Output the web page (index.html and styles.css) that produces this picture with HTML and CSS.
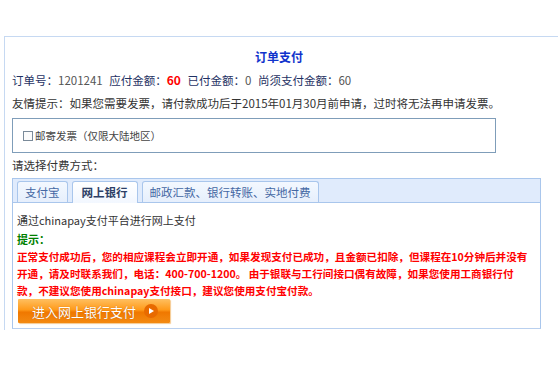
FILE: index.html
```html
<!DOCTYPE html>
<html lang="zh-CN">
<head>
    <meta charset="UTF-8">
    <title>订单支付</title>
    <link rel="stylesheet" href="styles.css">
</head>
<body>
<div class="pay-box">
    <h2 class="title">订单支付</h2>
    <p class="order-line">
        <span class="lbl">订单号：</span>1201241
        <span class="lbl">应付金额：</span><b class="money">60</b>
        <span class="lbl">已付金额：</span>0
        <span class="lbl">尚须支付金额：</span>60
    </p>
    <p class="notice">友情提示：如果您需要发票，请付款成功后于2015年01月30月前申请，过时将无法再申请发票。</p>
    <div class="invoice">
        <label><span class="chk"></span>邮寄发票（仅限大陆地区）</label>
    </div>
    <p class="choose">请选择付费方式：</p>
    <div class="tabs">
        <ul class="tab-head">
            <li>支付宝</li>
            <li class="on">网上银行</li>
            <li>邮政汇款、银行转账、实地付费</li>
        </ul>
        <div class="tab-body">
            <p class="via">通过chinapay支付平台进行网上支付</p>
            <p class="hint">提示：</p>
            <p class="warn">正常支付成功后，您的相应课程会立即开通，如果发现支付已成功，且金额已扣除，但课程在10分钟后并没有开通，请及时联系我们，电话：400-700-1200。 由于银联与工行间接口偶有故障，如果您使用工商银行付<br>款，不建议您使用chinapay支付接口，建议您使用支付宝付款。</p>
            <a class="pay-btn" href="#">进入网上银行支付<span class="arrow"></span></a>
        </div>
    </div>
</div>
</body>
</html>
```

FILE: styles.css
```css
html{
    overflow: hidden;
}
body{
    margin: 0;
    font-family: "Noto Sans CJK SC", "Noto Sans", sans-serif;
    font-size: 11.5px;
    color: #333;
    background: #fff;
}
p{
    margin: 0;
}
.pay-box{
    margin: 36px 0 0 4px;
    width: 600px;
    height: 293px;
    border: 1px solid #c6d9f2;
    border-bottom: none;
    padding: 0 0 0 7px;
}
.title{
    margin: 10px 0 0 0;
    width: 534px;
    text-align: center;
    font-size: 12px;
    line-height: 20px;
    color: #1133cc;
}
.order-line{
    margin-top: 3px;
    line-height: 20px;
    color: #555;
}
.order-line .lbl{
    color: #1f3264;
    margin-left: 4px;
}
.order-line .lbl:first-child{
    margin-left: 0;
}
.money{
    color: #ff0000;
    font-size: 12px;
}
.notice{
    margin-top: 3px;
    line-height: 20px;
}
.invoice{
    margin-top: 5px;
    width: 482px;
    height: 33px;
    border: 1px solid #7f9db9;
    font-size: 10.5px;
    color: #444;
}
.invoice label{
    display: flex;
    align-items: center;
    margin: 9px 0 0 10px;
}
.chk{
    width: 8px;
    height: 8px;
    border: 1px solid #7a8a99;
    background: #fbfbfb;
    margin-right: 2px;
}
.choose{
    margin-top: 2px;
    line-height: 20px;
}
.tabs{
    margin-top: 3px;
    width: 527px;
    border: 1px solid #a9c6ec;
    border-bottom-color: #b9d0ef;
}
.tab-head{
    list-style: none;
    margin: 0;
    padding: 2px 0 0 4px;
    height: 21px;
    display: flex;
    gap: 4px;
    background: #e0ebfc;
    border-bottom: 1px solid #a9c6ec;
}
.tab-head li{
    height: 20px;
    line-height: 20px;
    padding: 0 7px;
    border: 1px solid #a9c6ec;
    border-bottom: none;
    border-radius: 3px 3px 0 0;
    background: linear-gradient(#f3f8ff, #e6effc);
    color: #4467a3;
    font-size: 11.5px;
    white-space: nowrap;
}
.tab-head li.on{
    background: linear-gradient(#ffffff, #f2f7ff);
    color: #2d3f66;
    font-weight: bold;
    height: 21px;
    margin-bottom: -1px;
    padding: 0 9px;
}
.tab-body{
    padding: 7px 10px 5px 4px;
    background: #fff;
}
.via{
    line-height: 20px;
    font-size: 11px;
    color: #333;
}
.hint{
    margin-top: 1px;
    line-height: 17px;
    color: #008000;
    font-weight: bold;
    font-size: 11px;
}
.warn{
    line-height: 17px;
    color: #ff0000;
    font-weight: bold;
    font-size: 10.6px;
}
.pay-btn{
    display: flex;
    align-items: center;
    gap: 8px;
    width: 138px;
    height: 24px;
    padding-left: 14px;
    margin-left: 1px;
    background: linear-gradient(#ffc060 0%, #ff9a1a 45%, #f07800 55%, #f38a12 100%);
    border-radius: 1px;
    box-shadow: 1px 1px 1px #f5c98f;
    color: #fff;
    font-size: 13px;
    text-decoration: none;
    text-shadow: 0 0 1px #b85a00;
}
.arrow{
    width: 14px;
    height: 14px;
    border-radius: 50%;
    background: #e86a00;
    position: relative;
}
.arrow::after{
    content: "";
    position: absolute;
    left: 5px;
    top: 3.5px;
    border-left: 5px solid #fff;
    border-top: 3.5px solid transparent;
    border-bottom: 3.5px solid transparent;
}
```
